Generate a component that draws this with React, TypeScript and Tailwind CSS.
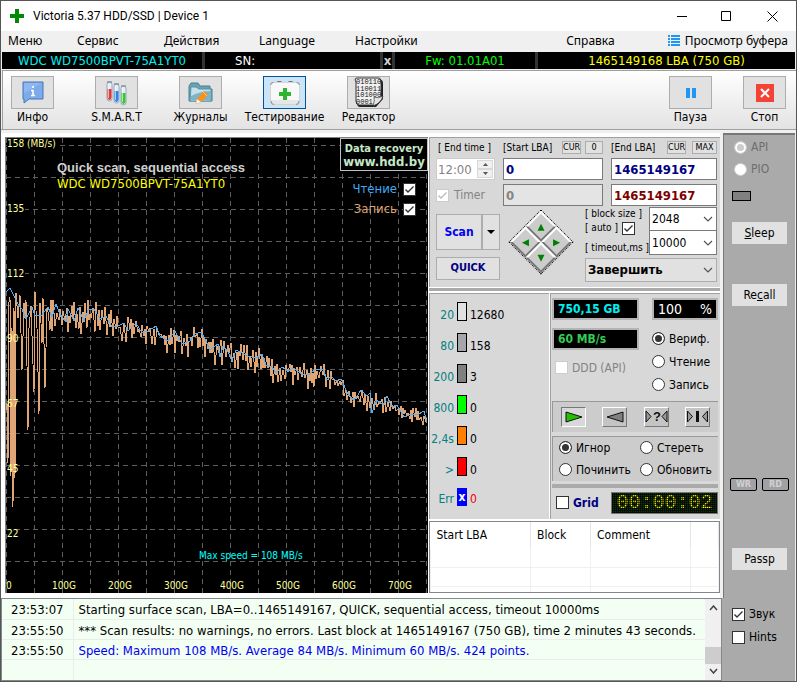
import { useState, type ReactNode } from 'react'

const baseLine = [
  [0, 154], [4, 150], [8, 158], [12, 166], [16, 171], [20, 181], [26, 169], [29, 178], [36, 177], [42, 169],
  [46, 179], [50, 166], [54, 176], [60, 184], [62, 171], [68, 183], [72, 170], [78, 183], [82, 172], [88, 171],
  [94, 181], [100, 178], [106, 189], [112, 188], [118, 185], [122, 193], [130, 185], [136, 195], [142, 193],
  [150, 188], [154, 198], [162, 203], [169, 193], [176, 206], [184, 203], [189, 196], [195, 194], [200, 203],
  [204, 212], [208, 209], [212, 206], [214, 219], [217, 208], [222, 214], [226, 223], [230, 212], [236, 215],
  [242, 218], [250, 220], [256, 216], [260, 227], [266, 229], [270, 235], [276, 229], [282, 233], [288, 230],
  [296, 236], [302, 237], [309, 232], [317, 231], [321, 242], [325, 238], [330, 243], [335, 241], [341, 254],
  [347, 262], [350, 260], [355, 252], [361, 258], [364, 255], [366, 275], [371, 262], [377, 267], [381, 258],
  [386, 269], [391, 267], [398, 279], [406, 276], [411, 277], [418, 273], [421, 285],
]

const earlySpikes = [
  [0, 272], [1, 265], [2, 325], [3, 164], [4, 159], [5, 338], [6, 190], [7, 369], [8, 170], [9, 340], [10, 155],
  [12, 180], [14, 157], [16, 232], [18, 165], [19, 180], [20, 162], [22, 292], [23, 190], [25, 168], [26, 198],
  [28, 254], [29, 154], [31, 190], [33, 276], [34, 165], [36, 205], [37, 160], [39, 250], [41, 170],
]

function baseAt(x: number) {
  for (let i = 1; i < baseLine.length; i++) {
    const [x0, y0] = baseLine[i - 1]
    const [x1, y1] = baseLine[i]
    if (x <= x1) return y0 + ((y1 - y0) * (x - x0)) / (x1 - x0)
  }
  return 285
}

function buildWriteTrace() {
  let seed = 41
  const rnd = () => {
    seed = (seed * 16807) % 2147483647
    return seed / 2147483647
  }
  const points = earlySpikes.map(p => p.join(','))
  let up = true
  for (let x = 42; x <= 421; x += rnd() < 0.45 ? 2 : 1) {
    const amp = x < 110 ? 20 : x < 320 ? 16 : 12
    const drift = (baseAt(x - 6) + baseAt(x) + baseAt(x + 6)) / 3 + 1
    const y = drift + (up ? -rnd() * amp * 0.7 : rnd() * amp)
    points.push(`${x},${Math.round(y)}`)
    up = !up
  }
  return points.join(' ')
}

const readTrace = baseLine.map(p => p.join(',')).join(' ')
const writeTrace = buildWriteTrace()

const speedLabels = ['158 (MB/s)', '135', '112', '90', '67', '45', '22']
const sizeLabels = ['0', '100G', '200G', '300G', '400G', '500G', '600G', '700G']

const blocks = [
  { label: '20', color: 'bg-[#e1e1e1]', count: '12680' },
  { label: '80', color: 'bg-[#a5a5aa]', count: '158' },
  { label: '200', color: 'bg-[#808080]', count: '3' },
  { label: '800', color: 'bg-[#00ff00]', count: '0' },
  { label: '2,4s', color: 'bg-[#ff8000]', count: '0' },
  { label: '>', color: 'bg-[#ff0000]', count: '0' },
]

const logRows = [
  { time: '23:53:07', text: 'Starting surface scan, LBA=0..1465149167, QUICK, sequential access, timeout 10000ms', color: 'text-black' },
  { time: '23:55:50', text: '*** Scan results: no warnings, no errors. Last block at 1465149167 (750 GB), time 2 minutes 43 seconds.', color: 'text-black' },
  { time: '23:55:50', text: 'Speed: Maximum 108 MB/s. Average 84 MB/s. Minimum 60 MB/s. 424 points.', color: 'text-[#0000f0]' },
]

function Check({ label, checked = false, disabled = false, name }: { label?: ReactNode; checked?: boolean; disabled?: boolean; name?: string }) {
  const [on, setOn] = useState(checked)
  return (
    <label className={`flex items-center gap-1 whitespace-nowrap ${disabled ? 'text-[#838383]' : ''}`}>
      <span className="grid shrink-0">
        <input
          type="checkbox"
          aria-label={name}
          checked={on}
          disabled={disabled}
          onChange={() => setOn(!on)}
          className="[grid-area:1/1] appearance-none w-[13px] h-[13px] bg-white border border-[#333] disabled:border-[#ccc]"
        />
        {on && (
          <svg viewBox="0 0 13 13" className={`[grid-area:1/1] w-[13px] h-[13px] pointer-events-none ${disabled ? 'stroke-[#bbb]' : 'stroke-[#333]'}`} fill="none" strokeWidth="1.4">
            <path d="M2.5 6.5 L5 9 L10.5 3.5" />
          </svg>
        )}
      </span>
      {label}
    </label>
  )
}

function Radio({ label, group, checked = false, disabled = false }: { label: string; group: string; checked?: boolean; disabled?: boolean }) {
  return (
    <label className={`flex items-center gap-1 whitespace-nowrap ${disabled ? 'text-[#6d6d6d]' : ''}`}>
      <input
        type="radio"
        name={group}
        defaultChecked={checked}
        disabled={disabled}
        className="appearance-none shrink-0 w-[13px] h-[13px] rounded-full bg-white border border-[#333] disabled:border-[#ccc] checked:shadow-[inset_0_0_0_2px_#fff] checked:bg-[#333] disabled:checked:bg-[#ccc]"
      />
      {label}
    </label>
  )
}

function Tool({ label, active = false, children }: { label: string; active?: boolean; children: ReactNode }) {
  return (
    <div className="flex flex-col items-center w-[43px] text-[12px] leading-4">
      <button aria-label={label} className={`flex items-center justify-center w-[43px] h-[33px] shrink-0 border ${active ? 'bg-[#cce4f7] border-[#005499]' : 'bg-[#e1e1e1] border-[#adadad]'}`}>
        {children}
      </button>
      <span className="whitespace-nowrap">{label}</span>
    </div>
  )
}

function Toolbar() {
  return (
    <div className="flex justify-between h-[59px] pt-[5px] pl-2 pr-[10px] border-t border-l border-[#a0a0a0] bg-gradient-to-b from-white to-[#e3e3e3]">
      <div className="flex gap-[41px]">
        <Tool label="Инфо">
          <svg width="22" height="24" viewBox="0 0 22 24">
            <path d="M1 1h20v17H7l-5 4v-4H1z" fill="#7cabeb" stroke="#4875b5" />
            <path d="M2 2h18L2 12z" fill="#a3c6f6" opacity=".5" />
            <path d="M11 5v2M9 9.500h2v5M9 14.500h4" stroke="#fff" strokeWidth="1.6" fill="none" />
          </svg>
        </Tool>
        <Tool label="S.M.A.R.T">
          <svg width="22" height="26" viewBox="0 0 22 26">
            {[[1, 2, 'red', '#e23b36'], [8, 4, 'blue', '#2d86e3'], [15, 6, 'green', '#35c92d']].map(([x, y, key, fill]) => (
              <g key={key}>
                <rect x={x} y={y} width="5" height="19" rx="2.5" fill="#e5edf7" stroke="#9aa6bd" />
                <path d={`M${Number(x) + 0.5} ${Number(y) + 7}h4v9q-2 4-4 0z`} fill={String(fill)} />
                <path d={`M${Number(x) + 1.5} ${Number(y) + 2}v14`} stroke="#fff" opacity=".6" />
                <path d={`M${x} ${y}h5`} stroke="#68768f" />
              </g>
            ))}
          </svg>
        </Tool>
        <Tool label="Журналы">
          <svg width="26" height="24" viewBox="0 0 26 24">
            <path d="M1 20V5l2-3h7l2 3h10v3h2v12z" fill="#6aa2b4" stroke="#477f94" />
            <path d="M3 6h5l3 2h12v12H2z" fill="#c3e2eb" stroke="#5b93a6" />
            <path d="M3 15q10-5 20-5v9H3z" fill="#80b4c5" />
            <path d="M16 10l4 4-7 7-5 2 1-5z" fill="#f59217" />
            <path d="M8 23l1-5 4 3z" fill="#fff" stroke="#d8b98c" strokeWidth=".5" />
            <path d="M15 11l4 4" stroke="#ffc965" />
          </svg>
        </Tool>
        <Tool label="Тестирование" active>
          <svg width="32" height="26" viewBox="0 0 32 26">
            <path d="M8.500 3V1.500h4M23.500 3V1.500h-4" stroke="#777" fill="none" />
            <rect x="1.500" y="2.500" width="29" height="22" rx="3" fill="#f8f8f8" stroke="#d5d5d5" />
            <path d="M2 20h28v4H2z" fill="#e6e6e6" />
            <path d="M1.500 5q0-2.500 3-2.500M27.500 2.500q3 0 3 2.500M2 21q0 3.500 3 3.500M30 21q0 3.500-3 3.500" fill="none" stroke="#8c8c8c" />
            <path d="M14 8h4v4h4v4h-4v4h-4v-4h-4v-4h4z" fill="#2cb52f" />
          </svg>
        </Tool>
        <Tool label="Редактор">
          <svg width="30" height="31" viewBox="0 0 30 31">
            <path d="M4 3h23q2 0 2 4v15l-7 8H6q-3 0-3-4V7q-2-4 1-4" fill="#222" />
            <path d="M3 1h22q2 0 2 4v15l-7 8H5q-3 0-3-4V5q-2-4 1-4" fill="#f1f1f1" stroke="#333" />
            <g fontFamily="Liberation Mono, monospace" fontSize="7" fill="#111">
              <text x="2" y="7">010110</text>
              <text x="2" y="13.500">110011</text>
              <text x="2" y="20">101000</text>
              <text x="2" y="26.500">0001</text>
            </g>
            <path d="M19 29q2-6 1-9 4 2 9-1-2 7-10 10" fill="#e5e5e5" stroke="#333" strokeWidth=".7" />
          </svg>
        </Tool>
      </div>
      <div className="flex gap-[31px]">
        <Tool label="Пауза">
          <svg width="10" height="10" viewBox="0 0 10 10" fill="#2196f3"><path d="M0 0h4v10H0zM6 0h4v10H6z" /></svg>
        </Tool>
        <Tool label="Стоп">
          <svg width="18" height="18" viewBox="0 0 18 18"><path d="M0 0h18v18H0z" fill="#f44336" /><path d="M5 5l8 8M13 5l-8 8" stroke="#fff" strokeWidth="2" /></svg>
        </Tool>
      </div>
    </div>
  )
}

function SpeedChart() {
  return (
    <div className="relative flex-1 bg-black border-t border-l border-[#808080]">
      <svg viewBox="0 0 422 455" className="block w-full h-full" preserveAspectRatio="none">
        <g stroke="#5f5f5f" strokeDasharray="5 4" shapeRendering="crispEdges">
          {Array.from({ length: 16 }, (_, i) => <line key={i} x1={i * 28 + 0.5} x2={i * 28 + 0.5} y1="0" y2="455" />)}
          {Array.from({ length: 14 }, (_, i) => <line key={i} x1="0" x2="422" y1={i * 32 + 7.5} y2={i * 32 + 7.5} />)}
        </g>
        <polyline points={writeTrace} fill="none" stroke="#dfa574" shapeRendering="crispEdges" />
        <polyline points={readTrace} fill="none" stroke="#57aef5" shapeRendering="crispEdges" />
        <g fill="#ffff9b" fontSize="10">
          {speedLabels.map((label, i) => (
            <g key={label}>
              {i < 3 && <rect x="1" y={i * 65 + 1} width={i ? 18 : 49} height="11" fill="#000" />}
              <text x="1" y={i * 65 + 9}>{label}</text>
            </g>
          ))}
          {sizeLabels.map((label, i) => (
            <text key={label} x={i === 0 ? 0 : i * 56 + 2} y="451" textAnchor={i === 0 ? 'start' : 'middle'}>{label}</text>
          ))}
        </g>
        <text x="193" y="421" fontSize="10" fill="#00ffff">Max speed = 108 MB/s</text>
        <text x="51" y="34" fontSize="13" fontWeight="bold" fontFamily="Liberation Sans, sans-serif" fill="#d0d0d0">Quick scan, sequential access</text>
        <text x="51" y="50" fontSize="13" fill="#ffff00">WDC WD7500BPVT-75A1YT0</text>
      </svg>
      <div className="absolute right-0 top-0 flex flex-col items-end">
        <a href="#recovery" className="block w-[88px] h-[33px] pt-[3px] text-center bg-black border border-[#c0c0c0] font-bold text-[#c5e8c8] text-[11px] leading-[13px] whitespace-nowrap">
          Data recovery<br /><span className="text-[13px]">www.hdd.by</span>
        </a>
        <div className="flex flex-col items-end gap-1 pt-[10px] pr-3 text-[13px] leading-4">
          <label className="flex items-center gap-[6px] text-[#3fa9f5]">Чтение <Check name="Чтение" checked /></label>
          <label className="flex items-center gap-[6px] text-[#dfa574]">Запись <Check name="Запись" checked /></label>
        </div>
      </div>
    </div>
  )
}

function Arrow({ d }: { d: string }) {
  return <svg width="9" height="9" viewBox="0 0 9 9" className="-rotate-45" fill="#008000"><path d={d} /></svg>
}

function Combo({ label, options, className }: { label: string; options: string[]; className: string }) {
  return (
    <div className={`grid items-center ${className}`}>
      <select aria-label={label} className="[grid-area:1/1] appearance-none w-full h-full pl-[2px] outline-none">
        {options.map(o => <option key={o}>{o}</option>)}
      </select>
      <svg viewBox="0 0 10 6" className="[grid-area:1/1] justify-self-end w-[10px] h-[6px] mr-[3px] pointer-events-none" fill="none" stroke="#555" strokeWidth="1.2"><path d="M1 1l4 4 4-4" /></svg>
    </div>
  )
}

const miniButton = 'h-[13px] border border-[#adadad] bg-[#e1e1e1] text-[9px] leading-none'
const lbaInput = 'w-full h-[22px] px-[2px] border border-[#7a7a7a] text-[13px] font-bold'

function ScanSettings() {
  return (
    <section className="h-[150px] pl-[6px] pr-[3px] pt-[3px] bg-[#d8d8d8] border-t border-l border-[#a0a0a0]">
      <div className="grid grid-cols-[59px_100px_1fr] gap-x-2 text-[10px] leading-[13px] whitespace-nowrap">
        <div className="flex flex-col gap-[4px]">
          <span className="pl-[2px]">[ End time ]</span>
          <div className="flex h-[22px] bg-white border border-[#ccc] p-px">
            <input aria-label="End time" disabled defaultValue="12:00" className="w-0 flex-1 text-[13px] text-[#838383]" />
            <div className="flex flex-col w-4">
              <button aria-label="Later" className="flex-1 flex items-center justify-center bg-[#f0f0f0] border border-[#d8d8d8]"><svg width="5" height="3"><path d="M0 3l2.500-3L5 3z" fill="#555" /></svg></button>
              <button aria-label="Earlier" className="flex-1 flex items-center justify-center bg-[#f0f0f0] border border-[#d8d8d8]"><svg width="5" height="3"><path d="M0 0l2.500 3L5 0z" fill="#555" /></svg></button>
            </div>
          </div>
          <div className="flex items-center h-[22px] text-[12px]"><Check label={<span className="pl-px">Timer</span>} checked disabled /></div>
        </div>
        <div className="flex flex-col gap-[4px]">
          <div className="flex justify-between h-[13px]">
            <span>[Start LBA]</span>
            <span className="flex gap-1"><button className={`${miniButton} w-[19px]`}>CUR</button><button className={`${miniButton} w-[18px]`}>0</button></span>
          </div>
          <input aria-label="Start LBA" defaultValue="0" className={`${lbaInput} bg-white text-[#000080]`} />
          <input aria-label="Current LBA" disabled defaultValue="0" className={`${lbaInput} bg-[#e4e4e4] text-[#838383]`} />
        </div>
        <div className="flex flex-col gap-[4px]">
          <div className="flex justify-between h-[13px]">
            <span>[End LBA]</span>
            <span className="flex gap-[6px]"><button className={`${miniButton} w-[19px]`}>CUR</button><button className={`${miniButton} w-[25px]`}>MAX</button></span>
          </div>
          <input aria-label="End LBA" defaultValue="1465149167" className={`${lbaInput} bg-white text-[#000080]`} />
          <input aria-label="Last LBA" defaultValue="1465149167" className={`${lbaInput} bg-white text-[#800000]`} />
        </div>
      </div>
      <div className="flex mt-px">
        <div className="flex flex-col gap-[7px] w-[64px] pt-[7px] font-bold">
          <div className="flex h-[36px]">
            <button className="w-[46px] bg-[#e1e1e1] border border-[#adadad] text-[12px] text-[#0000f0]">Scan</button>
            <button aria-label="Scan options" className="flex-1 flex items-center justify-center bg-[#e1e1e1] border border-[#adadad]"><svg width="8" height="5"><path d="M0 0h8L4 4z" /></svg></button>
          </div>
          <button className="h-[23px] bg-[#e1e1e1] border border-[#adadad] text-[11px] text-[#000080]">QUICK</button>
        </div>
        <div className="flex items-center justify-center w-[66px] h-[70px] ml-2">
          <div className="grid grid-cols-2 w-[46px] h-[46px] rotate-45 border border-dotted border-black">
            <button aria-label="Up" className="flex items-center justify-center bg-[#ccc] border-2 border-t-white border-l-white border-r-[#777] border-b-[#777]"><Arrow d="M4.500 1L8 8H1z" /></button>
            <button aria-label="Right" className="flex items-center justify-center bg-[#ccc] border-2 border-t-white border-l-white border-r-[#777] border-b-[#777]"><Arrow d="M1 1l7 3.500L1 8z" /></button>
            <button aria-label="Left" className="flex items-center justify-center bg-[#ccc] border-2 border-t-white border-l-white border-r-[#777] border-b-[#777]"><Arrow d="M8 1L1 4.500 8 8z" /></button>
            <button aria-label="Down" className="flex items-center justify-center bg-[#ccc] border-2 border-t-white border-l-white border-r-[#777] border-b-[#777]"><Arrow d="M1 1h7L4.500 8z" /></button>
          </div>
        </div>
        <div className="flex flex-col w-[132px] ml-auto gap-[3px]">
          <div className="flex justify-between text-[10px] leading-[14px] whitespace-nowrap">
            <div className="flex flex-col h-[48px]">
              <span>[ block size ]</span>
              <span className="flex gap-1 items-center">[ auto ] <Check name="auto" checked /></span>
              <span className="mt-auto">[ timeout,ms ]</span>
            </div>
            <div className="flex flex-col w-[68px] shrink-0">
              <Combo label="Block size" options={['2048']} className="h-[24px] bg-white border border-[#7a7a7a] text-[12px]" />
              <Combo label="Timeout" options={['10000']} className="h-[24px] bg-white border border-t-0 border-[#7a7a7a] text-[12px]" />
            </div>
          </div>
          <Combo label="After scan" options={['Завершить']} className="h-[24px] bg-[#e1e1e1] border border-[#adadad] text-[13px] font-bold" />
        </div>
      </div>
    </section>
  )
}

const moveButton = 'flex items-center justify-center w-[25px] h-[20px] border'
const raised = 'bg-[#c4c4c4] border-t-white border-l-white border-r-[#777] border-b-[#777]'

function ScanState() {
  return (
    <section className="flex h-[227px] gap-px">
      <div className="flex flex-col w-[120px] pt-2 bg-[#d8d8d8] border-t border-l border-[#a0a0a0] text-[12px]">
        {blocks.map(b => (
          <div key={b.label} className="flex items-start h-[31px] gap-[3px] leading-[26px]">
            <span className="w-[24px] text-right text-[#008080] whitespace-nowrap">{b.label}</span>
            <span className={`w-[10px] h-[19px] border border-black ${b.color}`} />
            <span>{b.count}</span>
          </div>
        ))}
        <div className="flex items-start h-[31px] gap-[3px] leading-[22px]">
          <span className="w-[24px] text-right text-[#008080]">Err</span>
          <span className="w-[10px] h-[18px] bg-[#0000ff] text-white font-bold text-center leading-[18px]">x</span>
          <span className="text-[#f00000]">0</span>
        </div>
      </div>
      <div className="flex-1 pl-px pr-[2px] pt-1 bg-[#d8d8d8] border-t border-l border-[#a0a0a0] text-[12px]">
        <div className="flex justify-between h-[102px]">
          <div className="flex flex-col w-[87px]">
            <output className="block h-[22px] px-1 bg-black border-2 border-[#b4b4b4] text-[#00f0f0] font-bold leading-[18px]">750,15 GB</output>
            <output className="block h-[22px] mt-2 px-1 bg-black border-2 border-[#b4b4b4] text-[#33cc55] font-bold leading-[18px]">60 MB/s</output>
            <div className="pt-[9px] pl-[3px]"><Check label="DDD (API)" disabled /></div>
          </div>
          <div className="flex flex-col w-[66px]">
            <output className="flex justify-between h-[22px] px-1 bg-black border-2 border-[#b4b4b4] text-white text-[14px] leading-[18px]"><span>100</span><span>%</span></output>
            <div className="flex flex-col gap-[7px] pt-[11px] leading-4">
              <Radio label="Вериф." group="mode" checked />
              <Radio label="Чтение" group="mode" />
              <Radio label="Запись" group="mode" />
            </div>
          </div>
        </div>
        <div className="flex justify-around items-center h-[31px] mt-px bg-[#ccc] border-t border-l border-[#999]">
          <button aria-label="Forward" className={`${moveButton} bg-[#d8d8d8] border-t-[#777] border-l-[#777] border-r-white border-b-white`}><svg width="18" height="12"><path d="M1 1l16 5-16 5z" fill="#22c000" stroke="#111" /></svg></button>
          <button aria-label="Backward" className={`${moveButton} ${raised}`}><svg width="18" height="12"><path d="M17 1L1 6l16 5z" fill="#808080" stroke="#111" /></svg></button>
          <button aria-label="Random" className={`${moveButton} ${raised}`}>
            <svg width="23" height="13" fill="#999" stroke="#111"><path d="M1 1l5 5.500-5 5.500zM22 1l-5 5.500 5 5.500z" /><text x="8" y="11" fontSize="13" fontWeight="bold" fontFamily="Liberation Sans, sans-serif" fill="#111" stroke="none">?</text></svg>
          </button>
          <button aria-label="Butterfly" className={`${moveButton} ${raised}`}>
            <svg width="23" height="13" fill="#999" stroke="#111"><path d="M1.500 1l5 5.500-5 5.500zM21.500 1l-5 5.500 5 5.500z" /><path d="M11.500 1v11" strokeWidth="3" /></svg>
          </button>
        </div>
        <div className="grid grid-cols-[81px_1fr] items-center h-[45px] mt-1 pl-[6px] bg-[#ccc] border-t border-l border-[#999]">
          <Radio label="Игнор" group="action" checked />
          <Radio label="Стереть" group="action" />
          <Radio label="Починить" group="action" />
          <Radio label="Обновить" group="action" />
        </div>
        <div className="h-1 mt-[3px] bg-[#aaa]" />
        <div className="flex items-center justify-between mt-1 pl-1">
          <Check label={<b className="text-[#000080]">Grid</b>} />
          <div className="relative w-[107px] h-[22px] border border-[#777] bg-[#123012] text-center font-['Liberation_Mono',monospace] text-[20px] leading-[20px] text-[#ffff00]">
            00:00:02
            <span className="absolute inset-0 bg-[repeating-linear-gradient(0deg,#0009_0_1px,transparent_1px_2px),repeating-linear-gradient(90deg,#0009_0_1px,transparent_1px_2px)]" />
          </div>
        </div>
      </div>
    </section>
  )
}

function DefectTable() {
  return (
    <div className="h-[72px] bg-white border border-[#828790] overflow-hidden">
      <table className="w-full table-fixed border-collapse text-[12px]">
        <colgroup><col className="w-[100px]" /><col className="w-[60px]" /><col className="w-[100px]" /><col /></colgroup>
        <thead>
          <tr className="h-[27px] text-left">
            {['Start LBA', 'Block', 'Comment', ''].map(h => <th key={h} className="px-[6px] font-normal border-r border-[#e5e5e5]">{h}</th>)}
          </tr>
        </thead>
        <tbody>
          {[0, 1, 2].map(row => (
            <tr key={row} className="h-[19px]">
              {[0, 1, 2, 3].map(col => <td key={col} className="border border-t-0 border-[#f0f0f0]" />)}
            </tr>
          ))}
        </tbody>
      </table>
    </div>
  )
}

function SidePanel() {
  return (
    <aside className="flex flex-col w-[72px] pl-2 pt-1 bg-[#aaa] border-t-2 border-l border-[#777] text-[12px]">
      <div className="flex flex-col gap-[6px] pl-[2px] leading-4">
        <Radio label="API" group="port" checked disabled />
        <Radio label="PIO" group="port" disabled />
      </div>
      <span className="w-[19px] h-[10px] mt-[14px] bg-[#808080] border border-black" />
      <button className="w-[55px] h-[22px] mt-[21px] bg-[#e1e1e1]"><u>S</u>leep</button>
      <button className="w-[55px] h-[22px] mt-10 bg-[#e1e1e1]">Re<u>c</u>all</button>
      <div className="flex gap-[5px] -ml-[2px] mt-auto text-[9px] font-bold text-[#d0d0d0] leading-[11px] text-center">
        <span className="w-[27px] h-[13px] rounded-xs border border-black bg-[#a0a0a5]">WR</span>
        <span className="w-[27px] h-[13px] rounded-xs border border-black bg-[#a0a0a5]">RD</span>
      </div>
      <button className="w-[55px] h-[22px] mt-[57px] mb-[28px] bg-[#e1e1e1]">Passp</button>
    </aside>
  )
}

function EventLog() {
  return (
    <div className="flex flex-1 bg-[#f4fff4] border border-[#828790]">
      <table className="flex-1 table-fixed border-collapse text-[13px] leading-[17px]">
        <tbody>
          {logRows.map((row, i) => (
            <tr key={i} className="h-5 border-b border-[#ececec] whitespace-nowrap">
              <td className="w-[71px] pl-[9px] pt-[2px] border-r border-[#ececec]">{row.time}</td>
              <td className={`pl-[5px] pt-[2px] ${row.color}`}>{row.text}</td>
            </tr>
          ))}
          <tr className="h-5"><td className="border-r border-[#ececec]" /><td /></tr>
        </tbody>
      </table>
      <div className="flex flex-col items-center w-4 py-[6px] bg-[#f0f0f0]">
        <svg width="9" height="6" fill="none" stroke="#444" strokeWidth="1.500"><path d="M1 5l3.500-4L8 5" /></svg>
        <span className="w-full h-[17px] mt-auto mb-1 bg-[#cdcdcd]" />
        <svg width="9" height="6" fill="none" stroke="#444" strokeWidth="1.500"><path d="M1 1l3.500 4L8 1" /></svg>
      </div>
    </div>
  )
}

export default function App() {
  return (
    <div className="flex flex-col min-h-screen bg-[#f0f0f0] border border-[#555] text-black font-['DejaVu_Sans_Condensed','DejaVu_Sans',sans-serif]">
      {/* Title bar */}
      <header className="flex items-center h-[30px] pl-[9px] bg-white text-[12px]">
        <svg width="14" height="14" viewBox="0 0 14 14"><path d="M5 0h4v5h5v4H9v5H5V9H0V5h5z" fill="#008a00" /></svg>
        <h1 className="pl-[9px] flex-1 font-['Roboto',sans-serif]">Victoria 5.37 HDD/SSD | Device 1</h1>
        <button aria-label="Minimize" className="w-[45px] flex justify-center"><svg width="10" height="10" stroke="#000"><path d="M0 5.500h10" /></svg></button>
        <button aria-label="Maximize" className="w-[45px] flex justify-center"><svg width="11" height="11" fill="none" stroke="#000"><path d="M.5 .5h9v9h-9z" /></svg></button>
        <button aria-label="Close" className="w-[47px] flex justify-center"><svg width="11" height="11" stroke="#000"><path d="M.5 .5l10 10M10.500 .5l-10 10" /></svg></button>
      </header>

      {/* Menu */}
      <nav className="flex items-center h-[21px] pl-[7px] pr-2 pb-[2px] text-left font-['Noto_Sans',sans-serif] text-[12px] leading-4">
        <button className="w-[69px] text-left">Меню</button>
        <button className="w-[87px] text-left">Сервис</button>
        <button className="w-[95px] text-left">Действия</button>
        <button className="w-[96px] text-left">Language</button>
        <button className="text-left">Настройки</button>
        <button className="ml-auto mr-[53px]">Справка</button>
        <button className="flex items-center gap-[5px] whitespace-nowrap">
          <svg width="12" height="12" fill="#2196f3"><path d="M0 0h2v2H0zM3 0h9v2H3zM0 3h2v2H0zM3 3h9v2H3zM0 6h2v2H0zM3 6h9v2H3zM0 9h2v2H0zM3 9h9v2H3z" /></svg>
          Просмотр буфера
        </button>
      </nav>

      {/* Drive passport */}
      <div className="flex h-[17px] mx-px bg-black text-[13px] leading-[17px] text-center whitespace-nowrap">
        <span className="w-[203px] border-r-[3px] border-[#333] text-[#00f0f0]">WDC WD7500BPVT-75A1YT0</span>
        <span className="w-[178px] pl-[30px] text-left border-r-[3px] border-[#333] text-white">SN:</span>
        <button aria-label="Hide serial" className="w-[12px] border-r-[3px] border-[#333] text-[#d0d0d0] font-bold">x</button>
        <span className="w-[143px] border-r-[3px] border-[#333] text-[#00ff00]">Fw: 01.01A01</span>
        <span className="flex-1 text-[#ffff00]">1465149168 LBA (750 GB)</span>
      </div>

      <div className="pt-px pl-px"><Toolbar /></div>

      <main className="flex h-[469px] pt-[3px] pr-px border-t border-[#a0a0a0]">
        <div className="flex flex-1 pt-1 pb-[5px] pl-1 bg-white">
          <SpeedChart />
          <div className="flex flex-col w-[292px] pl-px">
            <ScanSettings />
            <div className="h-[3px] mt-px mb-[2px] bg-[#aaa]" />
            <ScanState />
            <div className="mt-[2px]"><DefectTable /></div>
          </div>
        </div>
        <div className="w-[3px]" />
        <SidePanel />
      </main>

      <footer className="flex flex-1 pr-px">
        <EventLog />
        <div className="flex flex-col w-[73px] gap-[7px] pt-2 pl-[10px] bg-[#aaa] text-[12px] leading-4">
          <Check label="Звук" checked />
          <Check label="Hints" />
        </div>
      </footer>
    </div>
  )
}
